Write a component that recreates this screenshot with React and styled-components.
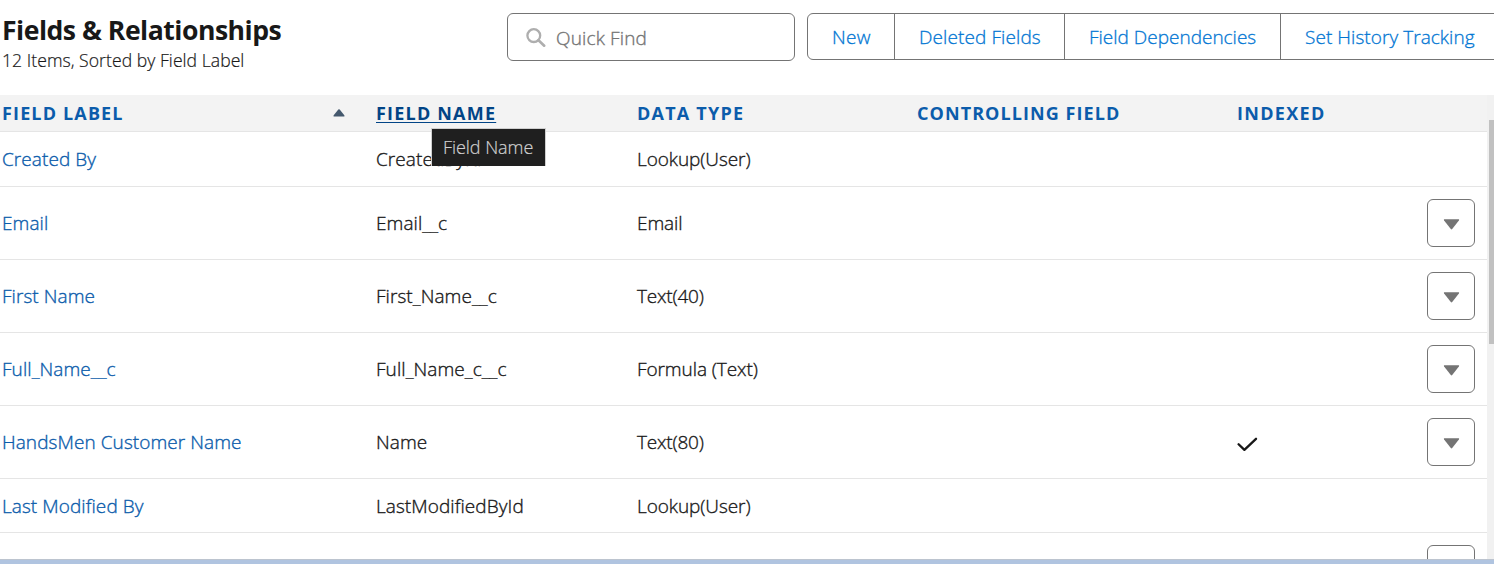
import React from 'react';
import styled, { createGlobalStyle, css } from 'styled-components';

const GlobalStyle = createGlobalStyle`
  *, *::before, *::after { box-sizing: border-box; }
  body {
    margin: 0;
    overflow: hidden;
    background: #fff;
    color: #181818;
    font-family: "Open Sans", "Noto Sans", sans-serif;
    font-size: 19px;
    font-weight: 300;
    -webkit-text-stroke-width: 0.35px;
  }
`;

const Page = styled.div`
  display: flex;
  flex-direction: column;
  width: 1494px;
  height: 564px;
  overflow: hidden;
`;

const PageHeader = styled.header`
  display: flex;
  flex: none;
  align-items: flex-start;
  height: 95px;
  padding-top: 13px;
`;

const Heading = styled.div`
  flex: none;
  width: 507px;
  padding-left: 2px;
  white-space: nowrap;
`;

const Title = styled.h1`
  margin: 0;
  font-size: 26.6px;
  font-weight: 700;
  line-height: 34px;
  letter-spacing: -0.5px;
  -webkit-text-stroke-width: 0;
`;

const Summary = styled.p`
  margin: 0;
  font-size: 17.6px;
  line-height: 26px;
  letter-spacing: 0.04px;
  -webkit-text-stroke-width: 0.2px;
`;

const SearchBox = styled.label`
  display: flex;
  flex: none;
  align-items: center;
  gap: 10px;
  width: 288px;
  height: 48px;
  margin-right: 12px;
  padding: 0 0 0 18px;
  border: 1px solid #747474;
  border-radius: 6px;
`;

const SearchInput = styled.input`
  flex: 1;
  min-width: 0;
  padding: 2px 0 0;
  border: 0;
  outline: 0;
  background: none;
  color: inherit;
  font: inherit;
  letter-spacing: 0.15px;
  &::placeholder { color: #747474; opacity: 1; }
`;

const ButtonGroup = styled.div`
  display: flex;
  flex: none;
  height: 47px;
  border: 1px solid #747474;
  border-radius: 6px;
`;

const GroupButton = styled.button`
  flex: none;
  width: ${(p) => p.$width}px;
  padding: 0 0 0 24px;
  border: 0;
  border-right: 1px solid #747474;
  background: none;
  color: #0176d3;
  font: inherit;
  letter-spacing: ${(p) => p.$tracking || 0}px;
  text-align: left;
  white-space: nowrap;
  -webkit-text-stroke-width: 0.3px;
`;

const ListArea = styled.main`
  display: flex;
  flex: none;
  height: 464px;
  overflow: hidden;
`;

const Table = styled.div`
  flex: none;
  width: 1487px;
`;

const columns = css`
  display: grid;
  grid-template-columns: 374px 261px 280px 320px 1fr auto;
  align-items: center;
`;

const HeaderRow = styled.div`
  ${columns}
  height: 37px;
  border-bottom: 1px solid #e5e5e5;
  background: #f3f3f3;
`;

const HeaderCell = styled.div`
  position: relative;
  display: flex;
  align-items: center;
  justify-content: space-between;
  padding: 0 29px 0 2px;
  color: ${(p) => (p.$active ? '#014486' : '#0b5cab')};
  font-size: 18px;
  font-weight: 700;
  line-height: 24px;
  letter-spacing: ${(p) => p.$tracking}px;
  white-space: nowrap;
  -webkit-text-stroke-width: 0;
`;

const HeaderText = styled.span`
  ${(p) => p.$active && css`
    text-decoration: underline;
    text-decoration-thickness: 1px;
    text-underline-offset: 2px;
  `}
`;

const Tooltip = styled.div`
  position: absolute;
  top: 27px;
  left: 57px;
  z-index: 1;
  width: 115px;
  height: 38px;
  padding-left: 11px;
  border: 1px solid #cfcfcf;
  border-bottom: 0;
  background: #1f1f1f;
  color: #d0d0d0;
  font-size: 18px;
  font-weight: 300;
  line-height: 37px;
  letter-spacing: -0.05px;
  -webkit-text-stroke-width: 0.2px;
`;

const Row = styled.div`
  ${columns}
  height: ${(p) => p.$height}px;
  border-bottom: 1px solid #e5e5e5;
`;

const Cell = styled.div`
  padding: 0 0 ${(p) => (p.$low ? 0 : 1)}px 2px;
  line-height: 28px;
  letter-spacing: ${(p) => p.$tracking ?? 0.07}px;
  white-space: nowrap;
`;

const FieldLink = styled.a`
  color: #0b5cab;
`;

const IndexedCell = styled.div`
  display: flex;
  padding: 4px 0 0 2px;
`;

const MenuButton = styled.button`
  display: flex;
  align-items: center;
  justify-content: center;
  width: 48px;
  height: 48px;
  margin-right: 12px;
  padding: 2px 0 0 1px;
  border: 1px solid #747474;
  border-radius: 6px;
  background: #fff;
`;

const ScrollTrack = styled.div`
  flex: 1;
  padding: 25px 0 0 2px;
  background: #f1f1f1;
`;

const ScrollThumb = styled.div`
  height: 224px;
  background: #c1c1c1;
`;

const BottomEdge = styled.footer`
  flex: none;
  height: 5px;
  border-top: 1px solid #bcc4cf;
  background: #b0c4e0;
`;

const SearchIcon = () => (
  <svg width="20" height="20" viewBox="0 0 20 20" fill="none" stroke="#aeaeae" aria-hidden="true">
    <circle cx="7.8" cy="8.6" r="6.4" strokeWidth="2.3" />
    <path d="M12.5 13.2L18.2 18.7" strokeWidth="2.6" strokeLinecap="round" />
  </svg>
);

const SortIcon = () => (
  <svg width="12" height="8" viewBox="0 0 12 8" fill="#44586d" aria-hidden="true">
    <path d="M5.3 0.5Q6 -0.1 6.7 0.5L11.3 6.2Q11.9 7.6 10.8 7.6H1.2Q0.1 7.6 0.7 6.2Z" />
  </svg>
);

const DownIcon = () => (
  <svg width="17" height="11" viewBox="0 0 16 11" fill="#747474" aria-hidden="true">
    <path d="M0.7 0.3H15.3Q16 0.5 15.4 1.4L8.7 10Q8 10.8 7.3 10L0.6 1.4Q0 0.5 0.7 0.3Z" />
  </svg>
);

const CheckIcon = () => (
  <svg width="21" height="15" viewBox="0 0 21 15" fill="none" stroke="#181818" strokeWidth="2.3" strokeLinecap="round" strokeLinejoin="round" aria-label="Indexed">
    <path d="M1.6 7.2L7.4 12.9L19 1.8" />
  </svg>
);

const fields = [
  { label: 'Created By', name: 'CreatedById', type: 'Lookup(User)', height: 55 },
  { label: 'Email', name: 'Email__c', type: 'Email', height: 73, menu: true },
  { label: 'First Name', name: 'First_Name__c', type: 'Text(40)', height: 73, menu: true },
  { label: 'Full_Name__c', name: 'Full_Name_c__c', type: 'Formula (Text)', height: 73, menu: true },
  { label: 'HandsMen Customer Name', name: 'Name', type: 'Text(80)', height: 73, menu: true, indexed: true },
  { label: 'Last Modified By', name: 'LastModifiedById', type: 'Lookup(User)', height: 54 },
  { label: '', name: '', type: '', height: 73, menu: true },
];

export default function App() {
  return (
    <>
      <GlobalStyle />
      <Page>
        <PageHeader>
          <Heading>
            <Title>Fields &amp; Relationships</Title>
            <Summary>12 Items, Sorted by Field Label</Summary>
          </Heading>
          <SearchBox>
            <SearchIcon />
            <SearchInput placeholder="Quick Find" />
          </SearchBox>
          <ButtonGroup>
            <GroupButton $width={87} $tracking={0.3}>New</GroupButton>
            <GroupButton $width={170} $tracking={0.1}>Deleted Fields</GroupButton>
            <GroupButton $width={216}>Field Dependencies</GroupButton>
            <GroupButton $width={220} $tracking={0.06}>Set History Tracking</GroupButton>
          </ButtonGroup>
        </PageHeader>
        <ListArea>
          <Table>
            <HeaderRow>
              <HeaderCell $tracking={1.15}>
                <HeaderText>FIELD LABEL</HeaderText>
                <SortIcon />
              </HeaderCell>
              <HeaderCell $active $tracking={1.2}>
                <HeaderText $active>FIELD NAME</HeaderText>
                <Tooltip>Field Name</Tooltip>
              </HeaderCell>
              <HeaderCell $tracking={1.22}>DATA TYPE</HeaderCell>
              <HeaderCell $tracking={1.07}>CONTROLLING FIELD</HeaderCell>
              <HeaderCell $tracking={1.3}>INDEXED</HeaderCell>
            </HeaderRow>
            {fields.map((f, i) => (
              <Row key={i} $height={f.height}>
                <Cell $low={f.height === 54}><FieldLink>{f.label}</FieldLink></Cell>
                <Cell $low={f.height === 54}>{f.name}</Cell>
                <Cell $low={f.height === 54} $tracking={f.type.startsWith('Text') ? -0.2 : -0.08}>{f.type}</Cell>
                <Cell />
                <IndexedCell>{f.indexed && <CheckIcon />}</IndexedCell>
                {f.menu && <MenuButton aria-label="Row actions"><DownIcon /></MenuButton>}
              </Row>
            ))}
          </Table>
          <ScrollTrack>
            <ScrollThumb />
          </ScrollTrack>
        </ListArea>
        <BottomEdge />
      </Page>
    </>
  );
}
